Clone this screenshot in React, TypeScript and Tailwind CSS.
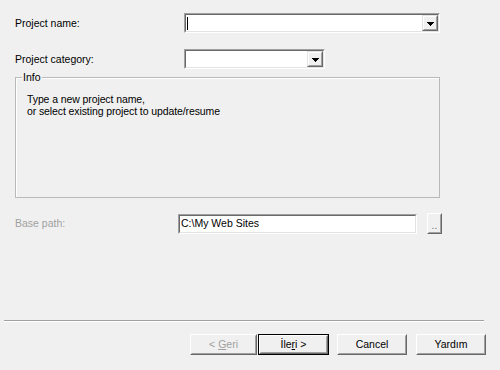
const font = { fontFamily: '"Liberation Sans", Arial, sans-serif' };

const Sunken = ({ className, children }: { className: string; children?: React.ReactNode }) => (
  <div className={`border border-t-[#a0a0a0] border-l-[#a0a0a0] border-b-white border-r-white ${className}`}>
    <div className="h-full border border-t-[#696969] border-l-[#696969] border-b-[#e3e3e3] border-r-[#e3e3e3] bg-white flex items-stretch">
      {children}
    </div>
  </div>
);

const Arrow = () => (
  <svg width="7" height="4" viewBox="0 0 7 4" shapeRendering="crispEdges">
    <path d="M0 0h7v1H0zM1 1h5v1H1zM2 2h3v1H2zM3 3h1v1H3z" fill="#000" />
  </svg>
);

const DropButton = () => (
  <div className="w-[16px] border border-t-[#e3e3e3] border-l-[#e3e3e3] border-b-[#696969] border-r-[#696969]">
    <div className="h-full border border-t-white border-l-white border-b-[#a0a0a0] border-r-[#a0a0a0] bg-[#f0f0f0] flex items-center justify-center pt-[1px]">
      <Arrow />
    </div>
  </div>
);

const Button = ({
  children,
  width,
  primary,
  disabled,
}: {
  children: React.ReactNode;
  width: string;
  primary?: boolean;
  disabled?: boolean;
}) => (
  <div className={`${width} h-[21px] ${primary ? "border border-black" : ""}`}>
    <div className="h-full border border-t-white border-l-white border-b-[#696969] border-r-[#696969]">
      <div
        className={`h-full border border-t-[#f0f0f0] border-l-[#f0f0f0] border-b-[#a0a0a0] border-r-[#a0a0a0] bg-[#f0f0f0] flex items-center justify-center ${
          disabled ? "text-[#a0a0a0]" : "text-black"
        }`}
      >
        {children}
      </div>
    </div>
  </div>
);

export default function App() {
  return (
    <div className="w-[500px] h-[370px] bg-[#f0f0f0] flex flex-col text-[10.5px] leading-[13px] text-black" style={font}>
      <div className="flex items-center pt-[13px] pl-[15px]">
        <span className="w-[169px]">Project name:</span>
        <Sunken className="w-[256px] h-[20px]">
          <div className="flex-1 pl-[1px] flex items-center">
            <div className="w-px h-[13px] bg-black" />
          </div>
          <DropButton />
        </Sunken>
      </div>

      <div className="flex items-center mt-[16px] pl-[15px]">
        <span className="w-[169px]">Project category:</span>
        <Sunken className="w-[141px] h-[20px]">
          <div className="flex-1" />
          <DropButton />
        </Sunken>
      </div>

      <div className="relative ml-[15px] mt-[8px] w-[425px] h-[121px] border border-[#b9b9b9] shadow-[inset_1px_1px_0_#fff]">
        <span className="absolute -top-[7px] left-[6px] px-[1px] bg-[#f0f0f0]">Info</span>
        <div className="pt-[15px] pl-[11px] leading-[12px] tracking-[-0.1px]">
          <p>Type a new project name,</p>
          <p>or select existing project to update/resume</p>
        </div>
      </div>

      <div className="flex items-center mt-[15px] pl-[15px]">
        <span className="w-[163px] text-[#a0a0a0]">Base path:</span>
        <Sunken className="w-[239px] h-[20px]">
          <span className="pl-[1px] flex items-center">C:\My Web Sites</span>
        </Sunken>
        <div className="ml-[10px]">
          <Button width="w-[15px]">
            <span className="text-[#707070] leading-[8px] pt-[3px]">..</span>
          </Button>
        </div>
      </div>

      <div className="mt-auto mx-[4px] w-[480px] border-t border-t-[#a0a0a0] border-b border-b-white" />

      <div className="flex items-center pl-[190px] pt-[12px] pb-[15px]">
        <Button width="w-[67px]" disabled>
          &lt; <span className="underline ml-[3px]">G</span>eri
        </Button>
        <div className="ml-[1px]">
          <Button width="w-[71px]" primary>
            İle<span className="underline">r</span>i &gt;
          </Button>
        </div>
        <div className="ml-[8px]">
          <Button width="w-[70px]">Cancel</Button>
        </div>
        <div className="ml-[9px]">
          <Button width="w-[70px]">Yardım</Button>
        </div>
      </div>
    </div>
  );
}
